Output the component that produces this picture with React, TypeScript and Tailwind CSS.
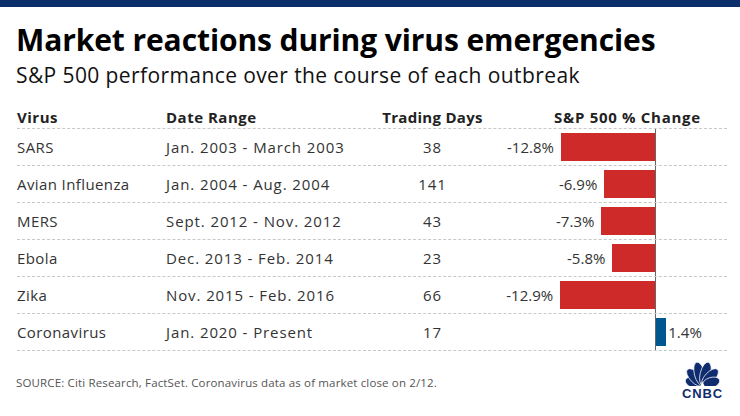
import React from "react";

interface Outbreak {
  virus: string;
  range: string;
  days: number;
  change: number;
}

const outbreaks: Outbreak[] = [
  { virus: "SARS", range: "Jan. 2003 - March 2003", days: 38, change: -12.8 },
  { virus: "Avian Influenza", range: "Jan. 2004 - Aug. 2004", days: 141, change: -6.9 },
  { virus: "MERS", range: "Sept. 2012 - Nov. 2012", days: 43, change: -7.3 },
  { virus: "Ebola", range: "Dec. 2013 - Feb. 2014", days: 23, change: -5.8 },
  { virus: "Zika", range: "Nov. 2015 - Feb. 2016", days: 66, change: -12.9 },
  { virus: "Coronavirus", range: "Jan. 2020 - Present", days: 17, change: 1.4 },
];

// px per percentage point
const SCALE = 7.35;

function Peacock() {
  const angles = [-72, -43, -14, 14, 43, 72];
  return (
    <svg width="45" height="24" viewBox="0 0 44 24">
      {angles.map((a) => {
        const len = Math.abs(a) > 60 ? 9 : Math.abs(a) > 30 ? 11 : 12;
        return (
          <ellipse
            key={a}
            cx="22"
            cy={23.5 - len}
            rx="5.2"
            ry={len}
            fill="#0f2c6e"
            stroke="#ffffff"
            strokeWidth="0.7"
            transform={`rotate(${a} 22 23.5)`}
          />
        );
      })}
      <path d="M20 24 L22 19.5 L24 24 Z" fill="#ffffff" />
    </svg>
  );
}

function ChangeBar({ change }: { change: number }) {
  const width = Math.abs(change) * SCALE;
  const label = `${change.toFixed(1)}%`;
  return (
    <div className="flex h-full flex-1">
      <div className="flex w-[173px] items-center justify-end gap-[7px] border-r border-[#666]">
        {change < 0 && (
          <>
            <span className="text-[15px] text-[#333]">{label}</span>
            <div className="h-[28px] bg-[#cf2a2a]" style={{ width }} />
          </>
        )}
      </div>
      <div className="flex flex-1 items-center gap-[2px]">
        {change > 0 && (
          <>
            <div className="h-[28px] bg-[#00568f]" style={{ width }} />
            <span className="text-[15px] text-[#333]">{label}</span>
          </>
        )}
      </div>
    </div>
  );
}

export default function App() {
  return (
    <div
      className="h-[416px] w-[740px] overflow-hidden bg-white text-[#222]"
      style={{ fontFamily: "'Open Sans', Lato, sans-serif" }}
    >
      <div className="h-[7px] bg-[#0a2f6b]" />

      <div className="pl-[16px] pr-[13px]">
        {/* Header */}
        <h1 className="mt-[15px] text-[30px] font-bold leading-[36px] tracking-[-0.1px] text-black">
          Market reactions during virus emergencies
        </h1>
        <p className="mt-[4px] text-[21px] leading-[26px] tracking-[0.4px] text-[#111]">
          S&amp;P 500 performance over the course of each outbreak
        </p>

        {/* Table */}
        <div className="mt-[16px] pl-[1px]">
          <div className="flex h-[25px] items-end whitespace-nowrap border-b border-dashed border-[#c8c8c8] pb-[2px] text-[15px] font-bold leading-[18px] tracking-[0.5px] text-[#222]">
            <div className="w-[149px]">Virus</div>
            <div className="w-[216px]">Date Range</div>
            <div className="flex w-[101px] justify-center tracking-[0.3px]">Trading Days</div>
            <div className="pl-[71px] tracking-[0.7px]">S&amp;P 500 % Change</div>
          </div>

          {outbreaks.map((o) => (
            <div
              key={o.virus}
              className="flex h-[37px] items-center whitespace-nowrap border-b border-dashed border-[#c8c8c8] text-[15px] text-[#333]"
            >
              <div className="w-[149px] tracking-[0.4px]">{o.virus}</div>
              <div className="w-[216px] tracking-[0.9px]">{o.range}</div>
              <div className="w-[101px] text-center tracking-[1px]">{o.days}</div>
              <ChangeBar change={o.change} />
            </div>
          ))}
        </div>

        {/* Footer */}
        <div className="flex items-start justify-between">
          <p className="mt-[23px] text-[11.5px] tracking-[0.15px] text-[#555]">
            SOURCE: Citi Research, FactSet. Coronavirus data as of market close on 2/12.
          </p>
          <div className="mr-[2px] mt-[11px] flex flex-col items-center">
            <Peacock />
            <div
              className="mt-[2px] text-[13px] font-black leading-[11px] tracking-[0.8px] text-[#0f2c6e]"
              style={{ fontFamily: "'Liberation Sans', Arial, sans-serif" }}
            >
              CNBC
            </div>
          </div>
        </div>
      </div>
    </div>
  );
}
